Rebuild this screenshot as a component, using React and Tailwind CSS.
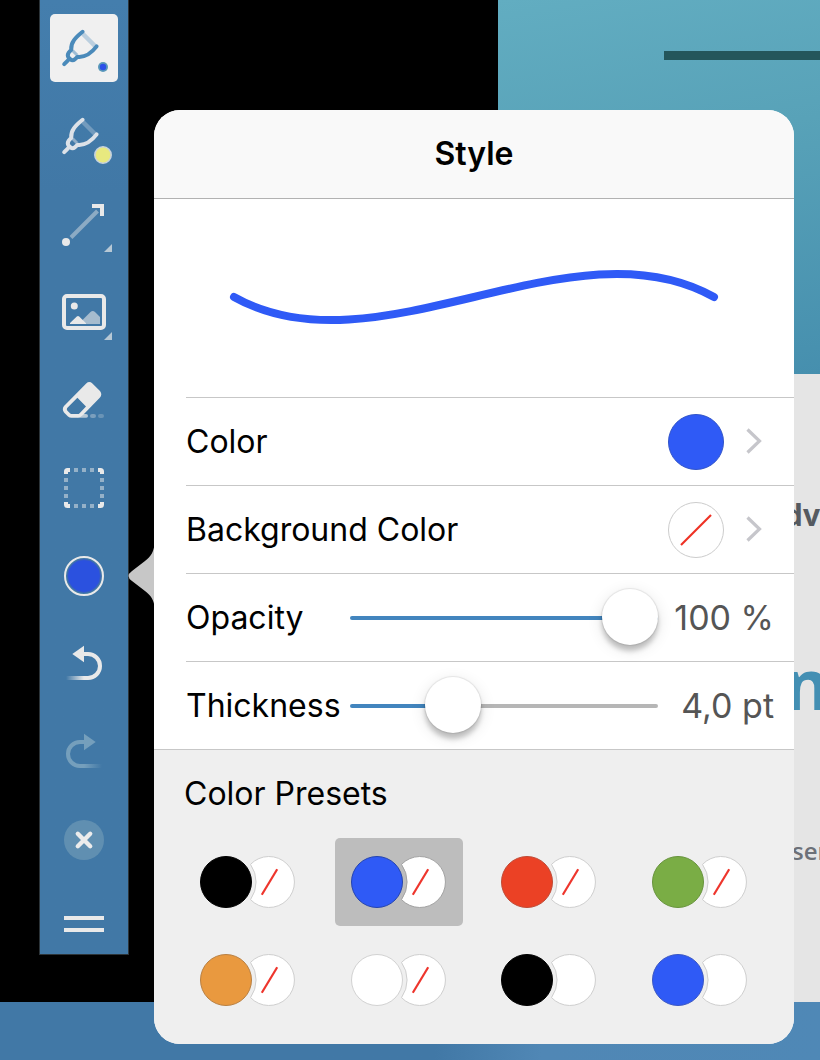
import { useState } from "react";

const PEN_PATHS = (
  <>
    <path d="M43 30 L55 42" strokeWidth="4.4" opacity="0.32" />
    <path d="M32.5 46.5 L37 51" strokeWidth="3" opacity="0.5" />
    <g strokeWidth="4" strokeLinecap="round" strokeLinejoin="round">
      <path d="M42.6 27.8 C35.5 33.5 30.6 38.5 31.2 45.8 L28.6 48.8 Q27 51.2 28.6 53.6 L30.4 55.4 Q32.6 57 34.8 55.4 L37.6 52.8 C45.5 53.6 50.8 50 56.6 42.4" />
      <path d="M28 56.4 L24.2 60.2" />
    </g>
  </>
);

const SUBMENU_MARK = <path d="M64 72 L72 64 V72 Z" fill="#e9e9e9" opacity="0.7" />;

function ToolIcon({ height = 88, children }) {
  return (
    <svg className="block w-[88px]" viewBox={`0 0 88 ${height}`} fill="none" aria-hidden="true">
      {children}
    </svg>
  );
}

function ToolButton({ label, children, height }) {
  return (
    <button type="button" aria-label={label} className="block">
      <ToolIcon height={height}>{children}</ToolIcon>
    </button>
  );
}

function Toolbar() {
  return (
    <nav
      aria-label="Annotation tools"
      className="flex w-[90px] shrink-0 flex-col items-center self-start border-x border-b border-[#2c3439] bg-linear-to-b from-[#447ead] via-[#4178a6] via-20% to-[#4178a6] pt-1"
    >
      <ToolButton label="Pen">
        <rect x="10" y="10" width="68" height="68" rx="5" fill="#f0f0f0" />
        <g stroke="#4a8aba">{PEN_PATHS}</g>
        <circle cx="63" cy="63" r="5" fill="#5a99b9" />
        <circle cx="63" cy="63" r="3.2" fill="#2c50e8" />
      </ToolButton>
      <ToolButton label="Highlighter">
        <g stroke="#dde2e8">{PEN_PATHS}</g>
        <circle cx="63" cy="63" r="8.2" fill="#e8e97f" stroke="#c6d2de" strokeWidth="1.6" />
      </ToolButton>
      <ToolButton label="Arrow">
        <path d="M31 57.5 L57.5 31" stroke="#e9e9e9" strokeWidth="4" opacity="0.45" />
        <path d="M52 26 H62 V36" stroke="#e9e9e9" strokeWidth="4" />
        <circle cx="26" cy="62" r="4" fill="#e9e9e9" />
        {SUBMENU_MARK}
      </ToolButton>
      <ToolButton label="Image">
        <rect x="24" y="28" width="40" height="32" rx="3" stroke="#e9e9e9" strokeWidth="4" />
        <circle cx="34.3" cy="38" r="3.5" fill="#e9e9e9" />
        <path d="M42.5 52 L50.5 44 Q52.7 42 55 44 L60 49 V56 H42 Z" fill="#e9e9e9" opacity="0.6" />
        <path d="M30 56 V55 L36.8 48.6 Q38 47.4 39.2 48.6 L46 55.2 V56 Z" fill="#e9e9e9" />
        {SUBMENU_MARK}
      </ToolButton>
      <ToolButton label="Eraser">
        <path
          fill="#e9e9e9"
          fillRule="evenodd"
          d="M46.2 27.4 Q49.3 24.8 52.4 27.4 L60 35 Q62.6 38.4 60 41.6 L43 59 Q40.5 61.8 37 61.8 H31.5 Q29.5 61.8 28 60.4 L24 56.4 Q21.6 53.2 24 50 Z M37.4 41.8 L27.2 52 Q26.4 53.2 27.2 54.4 L30.2 57.4 Q31 58.1 32 58.1 H37.6 Q38.8 58.1 39.6 57.2 L46 50.4 Z"
        />
        <path d="M40 58 H46 Q48 58 48 60 T46 61.8 H37 Z" fill="#e9e9e9" opacity="0.7" />
        <rect x="50" y="58" width="6" height="4" rx="2" fill="#e9e9e9" opacity="0.35" />
        <rect x="58" y="58" width="6" height="4" rx="2" fill="#e9e9e9" opacity="0.25" />
      </ToolButton>
      <ToolButton label="Selection">
        <path
          d="M26 30 V27.5 Q26 26 27.5 26 H30 M58 26 H60.5 Q62 26 62 27.5 V30 M62 58 V60.5 Q62 62 60.5 62 H58 M30 62 H27.5 Q26 62 26 60.5 V58"
          stroke="#e9e9e9"
          strokeWidth="4"
        />
        <path
          d="M34 26 H54 M34 62 H54 M26 34 V54 M62 34 V54"
          stroke="#e9e9e9"
          strokeWidth="4"
          strokeDasharray="4 4"
          opacity="0.5"
        />
      </ToolButton>
      <ToolButton label="Style">
        <circle cx="44" cy="44" r="19" stroke="#e9e9e9" strokeWidth="2" />
        <circle cx="44" cy="44" r="16.4" fill="#2b51df" stroke="#3a60bd" strokeWidth="0.8" />
      </ToolButton>
      <ToolButton label="Undo">
        <defs>
          <linearGradient id="undo-tail" gradientUnits="userSpaceOnUse" x1="26" y1="0" x2="44" y2="0">
            <stop offset="0" stopColor="#e9e9e9" stopOpacity="0" />
            <stop offset="1" stopColor="#e9e9e9" />
          </linearGradient>
        </defs>
        <path d="M32.3 34 L44 25.7 V42.3 Z" fill="#e9e9e9" />
        <path d="M43 34 H48 A12 12 0 0 1 48 58 H26" stroke="url(#undo-tail)" strokeWidth="4" />
      </ToolButton>
      <ToolButton label="Redo">
        <defs>
          <linearGradient id="redo-tail" gradientUnits="userSpaceOnUse" x1="62" y1="0" x2="44" y2="0">
            <stop offset="0" stopColor="#759fbc" stopOpacity="0" />
            <stop offset="1" stopColor="#759fbc" />
          </linearGradient>
        </defs>
        <path d="M55.7 34 L44 25.7 V42.3 Z" fill="#759fbc" />
        <path d="M45 34 H40 A12 12 0 0 0 40 58 H62" stroke="url(#redo-tail)" strokeWidth="4" />
      </ToolButton>
      <ToolButton label="Close">
        <circle cx="44" cy="44" r="20" fill="#608fb1" />
        <path d="M37.8 37.8 L50.2 50.2 M50.2 37.8 L37.8 50.2" stroke="#ececec" strokeWidth="4.4" strokeLinecap="round" />
      </ToolButton>
      <ToolButton label="Move toolbar" height={70}>
        <path d="M24 34 H64 M24 46 H64" stroke="#e9e9e9" strokeWidth="4" />
      </ToolButton>
    </nav>
  );
}

function DocumentPage() {
  return (
    <main className="ml-[369px] flex min-w-0 flex-1 flex-col overflow-hidden bg-[#e5e5e5] font-['Open_Sans','Noto_Sans',sans-serif] font-bold whitespace-nowrap">
      <div className="h-[374px] bg-linear-170 from-[#62adc1] via-[#58a2b8] via-40% to-[#468fae] pt-[51px]">
        <div className="ml-[166px] h-[9px] bg-[#24565b]" />
      </div>
      <div className="pt-[121px] pl-[286px]">
        <p className="text-[30px] leading-10 text-[#555a60]">dv</p>
        <p className="mt-[108px] text-[70px] leading-[80px] text-[#438fb3]">n</p>
        <p className="mt-[112px] pl-2 text-2xl leading-8 font-semibold text-[#6c7078]">sen</p>
      </div>
    </main>
  );
}

function Chevron() {
  return (
    <svg className="ml-[22px] h-7 w-4" viewBox="0 0 16 28" fill="none" aria-hidden="true">
      <path d="M1.5 1.5 L13.5 13 L1.5 24.5" stroke="#c6c6cb" strokeWidth="3.2" />
    </svg>
  );
}

function LinkRow({ label, children }) {
  return (
    <button type="button" className="flex h-[88px] w-full items-center border-t border-[#c7c7c7] pr-8 text-left">
      <span className="flex-1">{label}</span>
      {children}
      <Chevron />
    </button>
  );
}

function SliderRow({ id, label, max, step, initial, format }) {
  const [value, setValue] = useState(initial);
  return (
    <div className="flex h-[88px] items-center border-t border-[#c7c7c7] pr-5">
      <label htmlFor={id} className="w-[164px] shrink-0">
        {label}
      </label>
      <input
        id={id}
        type="range"
        min="0"
        max={max}
        step={step}
        value={value}
        onChange={(event) => setValue(Number(event.target.value))}
        style={{ "--fill": `${(value / max) * 100}%` }}
        className="h-14 min-w-0 flex-1 cursor-pointer appearance-none bg-transparent [&::-webkit-slider-runnable-track]:h-1 [&::-webkit-slider-runnable-track]:rounded-full [&::-webkit-slider-runnable-track]:bg-[linear-gradient(to_right,#4285be_var(--fill),#b6b6b6_var(--fill))] [&::-webkit-slider-thumb]:-mt-[27px] [&::-webkit-slider-thumb]:size-14 [&::-webkit-slider-thumb]:appearance-none [&::-webkit-slider-thumb]:rounded-full [&::-webkit-slider-thumb]:bg-white [&::-webkit-slider-thumb]:shadow-[0_0_1px_1px_rgba(0,0,0,0.08),0_6px_5px_rgba(0,0,0,0.2),0_4px_16px_rgba(0,0,0,0.12)]"
      />
      <output htmlFor={id} className="w-[116px] shrink-0 text-right text-[34px] text-[#555]">
        {format(value)}
      </output>
    </div>
  );
}

const PRESETS = [
  { name: "Black, no background", color: "#000000", edge: "#000000", slashed: true },
  { name: "Blue, no background", color: "#2f5af6", edge: "#2444b0", slashed: true },
  { name: "Red, no background", color: "#eb4125", edge: "#c04a35", slashed: true },
  { name: "Green, no background", color: "#7aad45", edge: "#68943d", slashed: true },
  { name: "Orange, no background", color: "#e9993f", edge: "#b98042", slashed: true },
  { name: "White, no background", color: "#ffffff", edge: "#d2d2d2", slashed: true },
  { name: "Black on white", color: "#000000", edge: "#000000", slashed: false },
  { name: "Blue on white", color: "#2f5af6", edge: "#3a57c4", slashed: false },
];

function PresetButton({ preset, selected, onSelect }) {
  return (
    <button
      type="button"
      aria-label={preset.name}
      aria-pressed={selected}
      onClick={onSelect}
      className={selected ? "rounded-[5px] bg-[#bdbdbd]" : "rounded-[5px]"}
    >
      <svg className="block h-[88px] w-32" viewBox="0 0 128 88" fill="none" aria-hidden="true">
        <path
          d="M66.5 26.4 A25.5 25.5 0 1 1 66.5 61.6 A30.5 30.5 0 0 0 66.5 26.4 Z"
          fill="#ffffff"
          stroke={selected ? "#a3a3a3" : "#cfcfcf"}
        />
        {preset.slashed && <path d="M93.2 31.2 L77.8 56.8" stroke="#ee352c" strokeWidth="2.2" />}
        <circle cx="42" cy="44" r="25.5" fill={preset.color} stroke={preset.edge} />
      </svg>
    </button>
  );
}

function StylePopover() {
  const [selected, setSelected] = useState(1);
  return (
    <div role="dialog" aria-labelledby="style-title" className="absolute top-[110px] right-[26px] left-[154px]">
      <svg className="absolute top-[430px] -left-[26px] h-[70px] w-[27px]" viewBox="0 0 27 70" aria-hidden="true">
        <path d="M27 0 C26 13 23 16 17 21 L4 31 Q-3 36 4 41 L17 51 C23 56 26 59 27 70 Z" fill="#c7c7c7" />
      </svg>
      <div className="relative overflow-hidden rounded-[26px] bg-white font-[Inter,'Liberation_Sans',sans-serif] text-[32px] leading-[42px] text-black">
        <header className="flex h-[89px] items-center justify-center border-b border-[#b2b2b2] bg-[#f9f9f9]">
          <h1 id="style-title" className="font-semibold">
            Style
          </h1>
        </header>
        <svg className="mx-auto block h-[198px] w-[640px] max-w-full" viewBox="0 0 640 198" fill="none" aria-hidden="true">
          <path d="M80 98 C222 178 418 18 560 98" stroke="#2f5af6" strokeWidth="8" strokeLinecap="round" />
        </svg>
        <div className="pl-8">
          <LinkRow label="Color">
            <span className="size-14 rounded-full border border-[#3154c8] bg-[#2f5af6]" />
          </LinkRow>
          <LinkRow label="Background Color">
            <svg className="size-14" viewBox="0 0 56 56" fill="none" aria-hidden="true">
              <circle cx="28" cy="28" r="27.5" fill="#ffffff" stroke="#cccccc" />
              <path d="M13 43 L43 13" stroke="#ee3124" strokeWidth="2.2" />
            </svg>
          </LinkRow>
          <SliderRow id="opacity" label="Opacity" max={100} step={1} initial={100} format={(v) => `${v} %`} />
          <SliderRow
            id="thickness"
            label="Thickness"
            max={13.5}
            step={0.5}
            initial={4}
            format={(v) => `${v.toFixed(1).replace(".", ",")} pt`}
          />
        </div>
        <section className="border-t border-[#c7c7c7] bg-[#efefef] px-[30px] pb-5">
          <h2 className="flex h-[88px] items-center">Color Presets</h2>
          <div className="grid grid-cols-[repeat(4,128px)] justify-between gap-y-[10px]">
            {PRESETS.map((preset, index) => (
              <PresetButton
                key={preset.name}
                preset={preset}
                selected={index === selected}
                onSelect={() => setSelected(index)}
              />
            ))}
          </div>
        </section>
      </div>
    </div>
  );
}

export default function App() {
  return (
    <div className="relative flex min-h-screen flex-col overflow-hidden bg-black">
      <div className="flex flex-1 pl-[39px]">
        <Toolbar />
        <DocumentPage />
      </div>
      <footer className="h-[58px] bg-linear-to-r from-[#4178a6] from-53% via-[#5087b5] via-66% to-[#4f88b6]" />
      <StylePopover />
    </div>
  );
}
